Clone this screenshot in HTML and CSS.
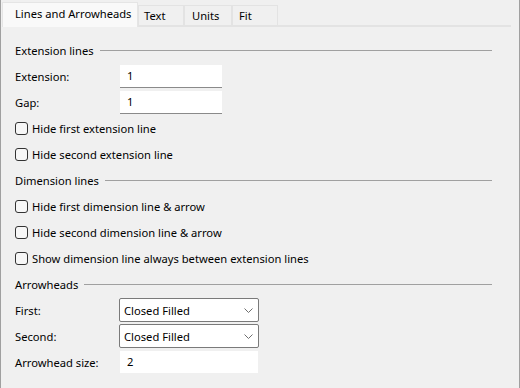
FILE: index.html
```html
<!DOCTYPE html>
<html lang="en">
<head>
    <meta charset="UTF-8">
    <title>Dimension Style</title>
    <link rel="stylesheet" href="styles.css">
</head>
<body>
    <div class="dialog">
        <div class="tabs">
            <div class="tab active">Lines and Arrowheads</div>
            <div class="tab tab-text">Text</div>
            <div class="tab tab-units">Units</div>
            <div class="tab tab-fit">Fit</div>
        </div>

        <div class="panel">
            <div class="group-title"><span>Extension lines</span><div class="rule"></div></div>
            <div class="row">
                <label>Extension:</label>
                <input type="text" class="field short" value="1">
            </div>
            <div class="row">
                <label>Gap:</label>
                <input type="text" class="field short" value="1">
            </div>
            <div class="row"><label class="check"><span class="box"></span>Hide first extension line</label></div>
            <div class="row"><label class="check"><span class="box"></span>Hide second extension line</label></div>

            <div class="group-title"><span>Dimension lines</span><div class="rule"></div></div>
            <div class="row"><label class="check"><span class="box"></span>Hide first dimension line &amp; arrow</label></div>
            <div class="row"><label class="check"><span class="box"></span>Hide second dimension line &amp; arrow</label></div>
            <div class="row"><label class="check"><span class="box"></span>Show dimension line always between extension lines</label></div>

            <div class="group-title"><span>Arrowheads</span><div class="rule"></div></div>
            <div class="row">
                <label>First:</label>
                <div class="combo">
                    <span>Closed Filled</span>
                    <svg width="9" height="5" viewBox="0 0 9 5"><path d="M0.5 0.5 L4.5 4.5 L8.5 0.5" fill="none" stroke="#6e6e6e" stroke-width="1"/></svg>
                </div>
            </div>
            <div class="row">
                <label>Second:</label>
                <div class="combo">
                    <span>Closed Filled</span>
                    <svg width="9" height="5" viewBox="0 0 9 5"><path d="M0.5 0.5 L4.5 4.5 L8.5 0.5" fill="none" stroke="#6e6e6e" stroke-width="1"/></svg>
                </div>
            </div>
            <div class="row">
                <label>Arrowhead size:</label>
                <input type="text" class="field wide" value="2">
            </div>
        </div>
    </div>
</body>
</html>
```

FILE: styles.css
```css
body {
    margin: 0;
    padding: 0;
    background-color: #f0f0f0;
    font-family: "Noto Sans", "Open Sans", sans-serif;
    font-size: 11.2px;
    color: #000;
}
.dialog {
    width: 518px;
    height: 388px;
    border-left: 1px solid #a0a0a0;
    border-right: 1px solid #a0a0a0;
    background-color: #f0f0f0;
}
.tabs {
    display: flex;
    align-items: flex-end;
    height: 23px;
    padding-top: 2px;
    margin-left: 1px;
    width: 509px;
    border-bottom: 2px solid #e3e3e3;
}
.tab {
    height: 20px;
    line-height: 20px;
    padding-left: 5px;
    box-sizing: border-box;
    white-space: nowrap;
    border: 1px solid #e3e3e3;
    border-bottom: none;
    background-color: #f0f0f0;
}
.tab.active {
    height: 25px;
    line-height: 22px;
    width: 136px;
    padding-left: 12px;
    margin-bottom: -2px;
    background-color: #f9f9f9;
    border-color: #e5e5e5;
    position: relative;
}
.tab-text { width: 46px; }
.tab-units { width: 48px; padding-left: 7px; }
.tab-fit { width: 46px; padding-left: 6px; }
.panel {
    padding: 10px 27px 0 14px;
}
.group-title {
    display: flex;
    align-items: center;
    gap: 6px;
    height: 26px;
}
.group-title .rule {
    flex: 1;
    height: 1px;
    background-color: #a0a0a0;
}
.row {
    display: flex;
    align-items: center;
    height: 26px;
}
.row > label {
    width: 105px;
}
.row > label.check {
    width: auto;
    display: flex;
    align-items: center;
    gap: 4px;
}
.box {
    width: 11px;
    height: 11px;
    border: 1px solid #333;
    border-radius: 3px;
    background-color: #f7f7f7;
}
.field {
    font-family: inherit;
    font-size: 11.2px;
    height: 23px;
    box-sizing: border-box;
    border: none;
    border-bottom: 1px solid #8a8a8a;
    background-color: #fff;
    padding: 0 0 0 7px;
    margin: 0;
    outline: none;
}
.field.short {
    width: 102px;
}
.field.wide {
    width: 138px;
    border-bottom: 1px solid #f0f0f0;
}
.combo {
    display: flex;
    align-items: center;
    justify-content: space-between;
    width: 140px;
    height: 24px;
    box-sizing: border-box;
    margin-left: -1px;
    padding: 0 5px 0 4px;
    background-color: #fff;
    border: 1px solid #7a7a7a;
    border-radius: 2px;
}
```
